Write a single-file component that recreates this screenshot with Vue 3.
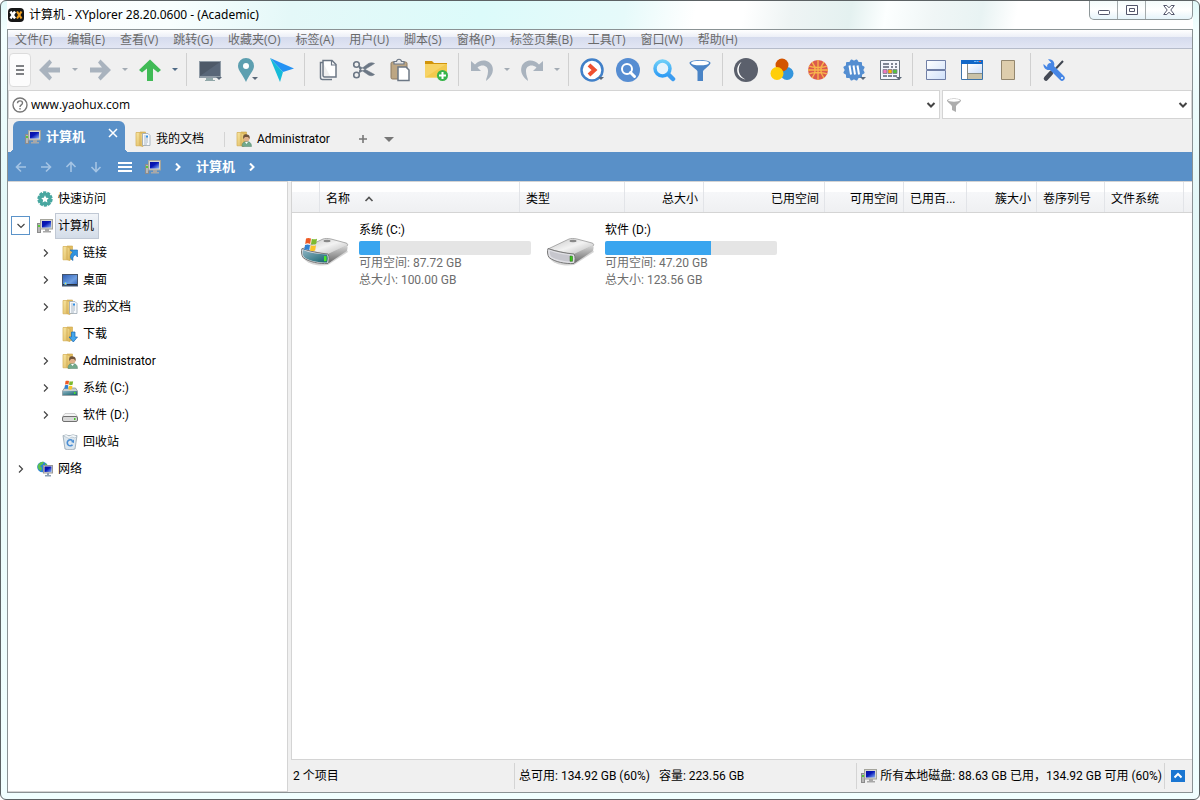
<template>
    <div class="window">
        <svg class="sprite" aria-hidden="true">
            <defs>
                <linearGradient id="g-folder" x1="0" x2="1" y1="0" y2="1">
                    <stop offset="0" stop-color="#f8e6a2" /><stop offset="1" stop-color="#dcb65a" />
                </linearGradient>
                <linearGradient id="g-screen" x1="0" x2="1" y1="0" y2="1">
                    <stop offset="0" stop-color="#0a10a0" /><stop offset=".45" stop-color="#0818b8" /><stop offset="1" stop-color="#8ab4f4" />
                </linearGradient>
                <linearGradient id="g-metal" x1="0" x2="1" y1="0" y2="1">
                    <stop offset="0" stop-color="#c4c4c4" /><stop offset=".5" stop-color="#f2f2f2" /><stop offset="1" stop-color="#b4b4b4" />
                </linearGradient>
                <linearGradient id="g-side" x1="0" x2="0" y1="0" y2="1">
                    <stop offset="0" stop-color="#d8d8d8" /><stop offset="1" stop-color="#6a6a6a" />
                </linearGradient>
                <linearGradient id="g-teal" x1="0" x2="1" y1="0" y2="1">
                    <stop offset="0" stop-color="#8fb4c4" /><stop offset="1" stop-color="#12616c" />
                </linearGradient>
                <linearGradient id="g-glass" x1="0" x2="0" y1="0" y2="1">
                    <stop offset="0" stop-color="#6ccdf8" /><stop offset="1" stop-color="#2f9cf4" />
                </linearGradient>
                <linearGradient id="g-pane" x1="0" x2="1" y1="0" y2="1">
                    <stop offset="0" stop-color="#ffffff" /><stop offset="1" stop-color="#cfe0fa" />
                </linearGradient>
                <linearGradient id="g-desk" x1="0" x2="1" y1="0" y2="1">
                    <stop offset="0" stop-color="#2c5cb4" /><stop offset=".6" stop-color="#6f9fe0" /><stop offset="1" stop-color="#2858b0" />
                </linearGradient>
            </defs>

            <symbol id="i-app" viewBox="0 0 16 16">
                <rect y="1" width="16" height="14" rx="4" fill="#161616" />
                <path d="M2.500 4.500 7 11.500M7 4.500 2.500 11.500" stroke="#fff" stroke-width="2.400" />
                <path d="M9 4.500 13.500 11.500M13.500 4.500 9 11.500" stroke="#f0a020" stroke-width="2.200" />
            </symbol>
            <symbol id="i-computer" viewBox="0 0 16 16">
                <rect x=".5" y="5.500" width="3" height="9" fill="#b8b8b8" stroke="#8c8c8c" />
                <rect x="1" y="7" width="2" height="2" fill="#58c838" />
                <rect x="3.500" y="1.500" width="12" height="9.500" fill="#d6d6d0" stroke="#a4a49c" />
                <rect x="5" y="3" width="9" height="6.500" fill="url(#g-screen)" />
                <path d="M8 11h4v2h2v1.500H6V13h2z" fill="#a8a8a8" />
            </symbol>
            <symbol id="i-folder" viewBox="0 0 16 16">
                <path d="M5 1h5.500v13.500H5z" fill="#e2bd60" stroke="#cfa648" stroke-width=".6" />
                <path d="M1 1.500h4L8 3v12.500l-3-.7H1z" fill="url(#g-folder)" stroke="#d2ac50" stroke-width=".7" />
                <path d="M5 2v12.500" stroke="#c99f44" stroke-width=".6" />
            </symbol>
            <symbol id="i-docs" viewBox="0 0 16 16">
                <use href="#i-folder" />
                <path d="M7.500 2.500H13L15 4.500v10H7.500z" fill="#f6f9fc" stroke="#9ca8b4" stroke-width=".8" />
                <path d="M9 5h2M9 7h4M9 9h4M9 11h4M9 13h3" stroke="#9aa8b8" stroke-width=".8" />
                <path d="M11 4.500h2v2h-2z" fill="#3290e4" />
            </symbol>
            <symbol id="i-user" viewBox="0 0 16 16">
                <use href="#i-folder" />
                <path d="M6 15.500c0-4 2-5 4.500-5s5 1 5 5z" fill="#72a98c" stroke="#57846c" stroke-width=".5" />
                <circle cx="10.500" cy="7.500" r="3" fill="#dfb08a" />
                <path d="M7.300 8C6.500 4 8.500 3 10.500 3.200S14.500 5 13.500 8L12 6 9 6z" fill="#70543c" />
                <path d="m9 11 1.500 2L12 11" fill="#fff" />
            </symbol>
            <symbol id="i-links" viewBox="0 0 16 16">
                <use href="#i-folder" />
                <path d="M8 5h7.500v7l-2.300-2.300c-2 1.500-2.700 3-2.200 5.800-3.500-2-3.300-5.500-.2-8.200z" fill="#2f94e0" stroke="#1767b4" stroke-width=".6" />
            </symbol>
            <symbol id="i-download" viewBox="0 0 16 16">
                <use href="#i-folder" />
                <path d="M9.500 6h3.500v5h2.500l-4.200 5-4.300-5h2.500z" fill="#43a6ec" stroke="#1767b4" stroke-width=".7" />
            </symbol>
            <symbol id="i-desktop" viewBox="0 0 16 16">
                <rect x=".5" y="2.500" width="15" height="11.500" fill="url(#g-desk)" stroke="#44546c" />
                <path d="M1 12h14v1.500H1z" fill="#28323e" />
                <circle cx="3.500" cy="11.500" r="1.500" fill="#66c0f4" />
                <circle cx="3.500" cy="11.500" r=".7" fill="#f4dc50" />
            </symbol>
            <symbol id="i-flag" viewBox="0 0 16 16">
                <path d="M3 1.500c2-1 3.500-.5 5 0L7.200 7c-2-1-3.500-.7-5 0z" fill="#ee5a24" />
                <path d="M8.800 1.800c2 .9 3.500.6 5.200-.1l-.8 5.200c-1.700.8-3.400.8-5.200 0z" fill="#7cba30" />
                <path d="M2 8c1.700-.8 3.200-.8 5 0l-.8 5.200c-1.500-.8-3.300-.8-5 0z" fill="#3282d2" />
                <path d="M7.800 8.200c1.700.8 3.400.8 5.200 0l-.8 5.200c-1.800.9-3.400.8-5.200 0z" fill="#fac428" />
            </symbol>
            <symbol id="i-sysdrive" viewBox="0 0 16 16">
                <path d="m2.500 8-2 3v4.500h15V11l-2-3z" fill="#c9cfd0" stroke="#80888c" stroke-width=".7" />
                <path d="M.8 11h14.400v4H.8z" fill="url(#g-teal)" />
                <path d="M12 12h1.500v2H12z" fill="#48e030" />
                <svg x="1" y="0" width="12" height="11"><use href="#i-flag" /></svg>
            </symbol>
            <symbol id="i-drive" viewBox="0 0 16 16">
                <path d="m3 6.500-2.500 3h15l-2.500-3z" fill="#f4f4f4" stroke="#b4b4b4" stroke-width=".6" />
                <rect x=".5" y="9.500" width="15" height="5" rx="1.500" fill="#d8d8d8" stroke="#707070" />
                <path d="M12 11h1.500v2H12z" fill="#46c828" />
            </symbol>
            <symbol id="i-trash" viewBox="0 0 16 16">
                <path d="m1 1.500 2 13.500c3 1 7 1 10 0l2-13.500z" fill="#dce6ee" stroke="#92a2ae" stroke-width=".8" />
                <path d="m1 2 3-1.500L7 2l4-1.500L15 2l-2 2-3-1-3 1.500L4 3z" fill="#f4f8fb" stroke="#a8b6c0" stroke-width=".6" />
                <path d="M10.500 6.800a3 3 0 1 0 0 4" fill="none" stroke="#4a8ed4" stroke-width="1.600" />
                <path d="m9 8 3-2.500V9z" fill="#4a8ed4" />
            </symbol>
            <symbol id="i-network" viewBox="0 0 16 16">
                <circle cx="5.500" cy="6" r="5.300" fill="#2a82d6" />
                <path d="M1 4c2-3 4-3.500 6-3.200L6 3 3 5l2 2-1 3C2 9 0 7 1 4M8 2l2.500 2L8 5z" fill="#5cc24c" />
                <rect x="6.500" y="4.500" width="9" height="7.500" fill="#dcdcdc" stroke="#989898" />
                <rect x="7.500" y="5.500" width="7" height="5.500" fill="url(#g-screen)" />
                <path d="M10 12h2v2h2v1.500H8V14h2z" fill="#8ca0b4" />
            </symbol>
            <symbol id="i-quick" viewBox="0 0 16 16">
                <circle cx="8" cy="8" r="6.600" fill="#48a7a0" />
                <circle cx="8" cy="8" r="6.800" fill="none" stroke="#48a7a0" stroke-width="1.800" stroke-dasharray="3.200 1.070" />
                <path d="m8 4.300 1.200 2.400 2.600.4-1.900 1.800.5 2.600L8 10.300l-2.400 1.200.5-2.600-1.900-1.800 2.600-.4z" fill="#fff" />
            </symbol>

            <symbol id="d-drive" viewBox="0 0 48 30">
                <path d="M3 22c6 7 18 7 24 6l20-13-2-4z" fill="#000" opacity=".16" />
                <path d="M1 12 22 2c2-.7 5-.7 8 0l15 4c2 .7 2 2 1 3L27 18z" fill="url(#g-metal)" stroke="#8c8c8c" stroke-width=".7" />
                <path d="M27 17 46 8c.8 2 .8 4-.3 6L28 26z" fill="url(#g-side)" />
                <path d="M1 11.500c8 3 16 4.500 26 5.500 1.500 3 1.500 6.500 0 9.500-9 .5-19-1.500-25-6C.5 18 0 14 1 11.500z" fill="#dfdfe4" stroke="#777" stroke-width="1" />
                <path d="M3 14c7 2.500 14 3.800 22 4.500.8 2 .8 4 0 6-8 0-16-1.500-21-5-1-1.500-1.500-3.500-1-5.500z" fill="#c6c6cd" />
                <path d="m23 19 2.500.3v5H23z" fill="#38c818" stroke="#286018" stroke-width=".5" />
                <ellipse cx="26" cy="4" rx="3.500" ry="1.200" fill="#888" />
            </symbol>
            <symbol id="d-sysdrive" viewBox="0 0 48 30">
                <use href="#d-drive" />
                <path d="M2 13c7 3 15 4 24 4.500 1 2.500 1 5 0 8-9 0-18-1.500-23-5.500C1.500 18 1.500 15 2 13z" fill="url(#g-teal)" />
                <path d="m23 19 2.500.3v5H23z" fill="#48e828" />
                <svg x="1" y="0" width="18" height="16"><use href="#i-flag" /></svg>
            </symbol>

            <symbol id="t-back" viewBox="0 0 24 24"><path d="M1 12 11.500 1.500 14 4.500 10 9.500h12v5H10l4 5-2.500 3z" fill="#a9b3be" /></symbol>
            <symbol id="t-forward" viewBox="0 0 24 24"><path d="M23 12 12.500 1.500 10 4.500l4 5H2v5h12l-4 5 2.500 3z" fill="#a9b3be" /></symbol>
            <symbol id="t-up" viewBox="0 0 24 24"><path d="M12 1.500 23 12l-3 2.500-5-4V23H9V10.500l-5 4L1 12z" fill="#40bb56" /></symbol>
            <symbol id="t-monitor" viewBox="0 0 24 24">
                <path d="M1 3h22v17H1z" fill="#909ba6" /><path d="M2 4h20v14H2z" fill="#4e5968" /><path d="M2 18 22 4v14z" fill="#596678" />
                <path d="M8 20h7v2h2v1H7v-1h1z" fill="#91a7a9" />
            </symbol>
            <symbol id="t-pin" viewBox="0 0 24 24">
                <path d="M12 24C9 17 4 12.500 4 8a8 8 0 0 1 16 0c0 4.500-5 9-8 16z" fill="#5d9fb0" /><circle cx="12" cy="8" r="3" fill="#fff" />
            </symbol>
            <symbol id="t-plane" viewBox="0 0 24 24">
                <path d="m0 0 24 10.500L13 14z" fill="#2492f4" /><path d="m0 0 13 14-3 10z" fill="#17bbd8" />
            </symbol>
            <symbol id="t-copy" viewBox="0 0 24 24">
                <path d="M7 4.500H4.500v15a2 2 0 0 0 2 2H16M7 2.500h9l4 4V19H8.500A1.500 1.500 0 0 1 7 17.500z" fill="#fff" stroke="#6c7785" stroke-width="1.500" />
                <path d="M15.500 3v4H20" fill="none" stroke="#6c7785" stroke-width="1.200" />
            </symbol>
            <symbol id="t-cut" viewBox="0 0 24 24">
                <path d="m7 8 15.500 8.500c-2 1.500-4 1.500-6 .5L7 10.500M7 15l15.500-9.500c-2-1-4-1-6 0L7 12.500" fill="#6c7785" stroke="#6c7785" stroke-width=".6" />
                <circle cx="4.500" cy="6.500" r="2.800" fill="#f0f0f0" stroke="#6c7785" stroke-width="1.600" />
                <circle cx="4.500" cy="17" r="2.800" fill="#f0f0f0" stroke="#6c7785" stroke-width="1.600" />
            </symbol>
            <symbol id="t-paste" viewBox="0 0 24 24">
                <rect x="3" y="4" width="16" height="17" rx="1.500" fill="#bda683" stroke="#8c7a62" />
                <path d="M6 6V3.500h2.500c.5-3 4.500-3 5 0H16V6z" fill="#e8e8e8" stroke="#6c7785" stroke-width="1.200" />
                <path d="M10 9h8l3 3v10.500H10z" fill="#fff" stroke="#6c7785" stroke-width="1.500" />
            </symbol>
            <symbol id="t-newfolder" viewBox="0 0 24 24">
                <path d="M1 3h7l2 2h13v14H1z" fill="#d1940a" /><path d="M1 6h22v13.500H1z" fill="#f7d365" />
                <path d="M1 19.500 22 6h1v13.500z" fill="#f2c94d" />
                <circle cx="18.500" cy="17.500" r="5.500" fill="#37b44a" /><path d="M18.500 14v7M15 17.500h7" stroke="#fff" stroke-width="2" />
            </symbol>
            <symbol id="t-undo" viewBox="0 0 24 24">
                <path d="M1 3v10h10L7.500 9.500c5-4 11-1.500 10.500 4 0 4-2 6.500-2 9.500 5-3.500 8-9 6.500-14C20.500 1.500 10.500 0 5 6.500z" fill="#a9b3be" />
            </symbol>
            <symbol id="t-redo" viewBox="0 0 24 24">
                <path d="M23 3v10H13l3.500-3.500c-5-4-11-1.500-10.500 4 0 4 2 6.500 2 9.500C3 19.500 0 14 1.500 9 3.500 1.500 13.500 0 19 6.500z" fill="#a9b3be" />
            </symbol>
            <symbol id="t-goto" viewBox="0 0 24 24">
                <circle cx="12" cy="12" r="10.500" fill="#fff" stroke="#4180c8" stroke-width="2.500" />
                <path d="m9 7 5.500 5L9 17" fill="none" stroke="#ef5030" stroke-width="4" />
            </symbol>
            <symbol id="t-find" viewBox="0 0 24 24">
                <circle cx="12" cy="12" r="12" fill="#568dd2" /><circle cx="11" cy="11" r="5" fill="none" stroke="#fff" stroke-width="2" />
                <path d="m14.500 14.500 4 4" stroke="#fff" stroke-width="3" stroke-linecap="round" />
            </symbol>
            <symbol id="t-glass" viewBox="0 0 24 24">
                <path d="m16 16 5 5" stroke="#3c9cf0" stroke-width="4.500" stroke-linecap="round" />
                <circle cx="10.500" cy="10.500" r="7.500" fill="#e7f3fb" stroke="url(#g-glass)" stroke-width="3.500" />
            </symbol>
            <symbol id="t-filter" viewBox="0 0 24 24">
                <path d="M1.500 5c0-4 21-4 21 0 0 2-7.500 7-7.500 8.500V23H9.500v-9.500C9.500 12 1.500 7 1.500 5z" fill="#4a84c6" />
                <ellipse cx="12" cy="5" rx="9" ry="2.300" fill="#fff" />
            </symbol>
            <symbol id="t-dark" viewBox="0 0 24 24">
                <circle cx="12" cy="12" r="12" fill="#5b606c" /><path d="M7.500 4C1 8 1.500 19.500 11.500 21.500 4.500 18 2.500 10.500 7.500 4z" fill="#fff" />
            </symbol>
            <symbol id="t-colors" viewBox="0 0 24 24">
                <circle cx="17" cy="15.500" r="6.500" fill="#3495dc" /><circle cx="12" cy="7" r="6.500" fill="#d35400" /><circle cx="7" cy="15.500" r="6.500" fill="#ffce08" />
            </symbol>
            <symbol id="t-ball" viewBox="0 0 24 24">
                <circle cx="12" cy="12" r="10" fill="#dc5a4b" />
                <path d="M12 2v20M2 12h20M6 4c4 5 4 11 0 16M18 4c-4 5-4 11 0 16M3 8c2 1 5 1.500 9 1.500S19 9 21 8M3 16c2-1 5-1.500 9-1.500s7 .5 9 1.500" fill="none" stroke="#f7b64c" stroke-width="1.300" />
            </symbol>
            <symbol id="t-badge" viewBox="0 0 24 24">
                <g fill="#548ed1">
                    <rect x="4" y="4" width="16" height="16" rx="1" />
                    <rect x="4" y="4" width="16" height="16" rx="1" transform="rotate(30 12 12)" />
                    <rect x="4" y="4" width="16" height="16" rx="1" transform="rotate(60 12 12)" />
                </g>
                <path d="M7.500 7.500 9 16.500M11.500 7.500 13 16.500M15.500 7.500 17 16.500" stroke="#fff" stroke-width="2" />
            </symbol>
            <symbol id="t-calendar" viewBox="0 0 24 24">
                <path d="M2.500 2.500h19v19h-19z" fill="#f4f6fd" stroke="#68727e" />
                <path d="M5 6h6M13 6h2M17 6h2M5 9h6M13 9h2M17 9h2M5 18h4M10 18h4M15 18h4" stroke="#808695" stroke-width="2" />
                <path d="M5 11.500h4v4H5z" fill="#ef78bd" /><path d="M10 11.500h4v4h-4z" fill="#ffb000" /><path d="M15 11.500h4v4h-4z" fill="#54c33b" />
                <path d="M5 11.500h4v4H5zM10 11.500h4v4h-4zM15 11.500h4v4h-4z" fill="none" stroke="#79798c" stroke-width=".8" />
            </symbol>
            <symbol id="t-split" viewBox="0 0 24 24">
                <path d="M2.500 2.500h19v9h-19zM2.500 12.500h19v9h-19z" fill="url(#g-pane)" stroke="#707fa6" />
            </symbol>
            <symbol id="t-layout" viewBox="0 0 24 24">
                <path d="M1.500 2.500h21v19h-21z" fill="#fff" stroke="#3d74aa" /><path d="M1 2h22v4H1z" fill="#1268c8" />
                <path d="M8 6h14v9H8z" fill="url(#g-pane)" /><path d="M8 16h14v5H8z" fill="#c9c2a8" /><path d="M7.500 6v15M8 15.500h14" stroke="#8a8d84" />
                <path d="M19 3h2v1h-2z" fill="#f05b35" /><path d="M14 3h2v1h-2zM16.500 3h2v1h-2z" fill="#70b8f5" />
            </symbol>
            <symbol id="t-panel" viewBox="0 0 24 24"><path d="M5.500 2.500h13v19h-13z" fill="#decdac" stroke="#94876e" /></symbol>
            <symbol id="t-tools" viewBox="0 0 24 24">
                <path d="m21 3-7 7.500" stroke="#3e4550" stroke-width="2" /><path d="m9 15-5 5.500" stroke="#454a55" stroke-width="4.500" stroke-linecap="round" />
                <path d="m8 8 12 12" stroke="#4686e5" stroke-width="5.500" stroke-linecap="round" />
                <path d="M1.500 6C1 10 5 13.500 9 11.500c4-2 4.500-7 1-9.500-1-.8-2.500-1-4-.8L9 4.500 8.500 8 5 9z" fill="#4686e5" /><circle cx="20" cy="20" r="1" fill="#fff" />
            </symbol>
        </svg>

        <header class="titlebar">
            <svg class="icon"><use href="#i-app" /></svg>
            <h1>计算机 - XYplorer 28.20.0600 - (Academic)</h1>
            <div class="controls">
                <button type="button" aria-label="最小化">
                    <svg width="12" height="12" viewBox="0 0 12 12"><rect x=".5" y="6.500" width="11" height="4" rx="1" fill="#fff" stroke="#53566b" /></svg>
                </button>
                <button type="button" aria-label="最大化">
                    <svg width="12" height="12" viewBox="0 0 12 12"><path d="M.5 1.500h11v9H.5z" fill="#fff" stroke="#53566b" /><path d="M3.500 4.500h5v3h-5z" fill="#fff" stroke="#53566b" /></svg>
                </button>
                <button type="button" class="close" aria-label="关闭">
                    <svg width="12" height="12" viewBox="0 0 12 12"><path d="M.7 1.500h3.100L6 3.800l2.200-2.300h3.100L7.800 6l3.500 4.500H8.200L6 8.200l-2.200 2.300H.7L4.200 6z" fill="#fff" stroke="#53566b" /></svg>
                </button>
            </div>
        </header>

        <div class="client">
            <nav class="menubar">
                <button v-for="item in menus" :key="item" type="button">{{ item }}</button>
            </nav>

            <div class="toolbar">
                <button type="button" class="grip" aria-label="工具栏">
                    <svg width="8" height="12" viewBox="0 0 8 12"><path d="M0 2h8M0 6h8M0 10h8" stroke="#55585c" stroke-width="1.500" /></svg>
                </button>
                <template v-for="(tool, i) in tools" :key="i">
                    <span v-if="tool.type === 'sep'" class="sep"></span>
                    <button v-else-if="tool.type === 'caret'" type="button" class="caret" :class="{ strong: tool.strong }" aria-label="更多"></button>
                    <button v-else type="button" class="tool" :aria-label="tool.label">
                        <svg><use :href="'#t-' + tool.icon" /></svg>
                        <i v-if="tool.drop"></i>
                    </button>
                </template>
            </div>

            <div class="address-row">
                <div class="combo address">
                    <svg class="icon" viewBox="0 0 16 16">
                        <circle cx="8" cy="8" r="7" fill="#fff" stroke="#777" stroke-width="1.400" />
                        <path d="M5.500 6.200C5.500 3 10.500 3.200 10.500 6c0 2-2.500 1.800-2.500 4M8 11v1.500" fill="none" stroke="#777" stroke-width="1.400" />
                    </svg>
                    <input v-model="address" type="text" aria-label="地址">
                    <button type="button" aria-label="展开地址"><svg viewBox="0 0 10 10"><path d="m1.500 3 3.500 3.500L8.500 3" /></svg></button>
                </div>
                <div class="combo filter">
                    <svg class="icon" viewBox="0 0 16 16"><path d="M1 3.500C1 .8 15 .8 15 3.500c0 1.500-5 4.500-5 6V15l-4-2V9.500C6 8 1 5 1 3.500z" fill="#adadad" /><ellipse cx="8" cy="3.300" rx="6" ry="1.400" fill="#fff" /></svg>
                    <input v-model="filter" type="text" aria-label="筛选">
                    <button type="button" aria-label="展开筛选"><svg viewBox="0 0 10 10"><path d="m1.500 3 3.500 3.500L8.500 3" /></svg></button>
                </div>
            </div>

            <div class="tabs">
                <div class="tab active">
                    <svg class="icon"><use href="#i-computer" /></svg>
                    <span>计算机</span>
                    <button type="button" aria-label="关闭标签"><svg width="10" height="10" viewBox="0 0 10 10"><path d="m1 1 8 8M9 1 1 9" stroke="#fff" stroke-width="1.500" /></svg></button>
                </div>
                <div class="tab docs"><svg class="icon"><use href="#i-docs" /></svg><span>我的文档</span></div>
                <div class="tab user"><svg class="icon"><use href="#i-user" /></svg><span>Administrator</span></div>
                <button type="button" class="tab-btn" aria-label="新建标签"><svg width="10" height="10" viewBox="0 0 10 10"><path d="M5 1v8M1 5h8" stroke="#777" stroke-width="1.600" /></svg></button>
                <button type="button" class="tab-btn" aria-label="标签列表"><svg width="10" height="10" viewBox="0 0 10 10"><path d="M0 3h10L5 8z" fill="#777" /></svg></button>
            </div>

            <div class="crumbs">
                <button v-for="arrow in arrows" :key="arrow.label" type="button" class="nav-arrow" :aria-label="arrow.label">
                    <svg width="12" height="12" viewBox="0 0 12 12"><path :d="arrow.path" /></svg>
                </button>
                <button type="button" class="crumb-menu" aria-label="菜单"><svg width="14" height="12" viewBox="0 0 14 12"><path d="M0 2h14M0 6h14M0 10h14" stroke="#fff" stroke-width="2" /></svg></button>
                <svg class="icon"><use href="#i-computer" /></svg>
                <svg class="chev" viewBox="0 0 8 8"><path d="m2 .5 3.500 3.500L2 7.500" /></svg>
                <a href="#">计算机</a>
                <svg class="chev" viewBox="0 0 8 8"><path d="m2 .5 3.500 3.500L2 7.500" /></svg>
            </div>

            <div class="body">
                <ul class="tree">
                    <li v-for="node in nodes" :key="node.name" :class="{ child: node.child, selected: node.open }">
                        <button v-if="node.arrow || node.open" type="button" class="toggle" :class="{ open: node.open }" :aria-label="'展开 ' + node.name">
                            <svg width="8" height="8" viewBox="0 0 8 8"><path :d="node.open ? 'M.5 2 4 5.500 7.500 2' : 'm2 .5 3.500 3.500L2 7.500'" /></svg>
                        </button>
                        <span v-else class="toggle"></span>
                        <svg class="icon"><use :href="'#i-' + node.icon" /></svg>
                        <span class="name">{{ node.name }}</span>
                    </li>
                </ul>

                <main class="pane">
                    <div class="list">
                        <div class="head">
                            <button v-for="(col, i) in columns" :key="i" type="button" :class="col.cls">
                                {{ col.name }}<svg v-if="col.sorted" width="10" height="8" viewBox="0 0 10 8"><path d="M1.500 6 5 2.500 8.500 6" fill="none" stroke="#555" stroke-width="1.700" /></svg>
                            </button>
                        </div>
                        <div class="drives">
                            <div v-for="drive in drives" :key="drive.name" class="drive">
                                <svg class="disk"><use :href="'#d-' + drive.icon" /></svg>
                                <div class="info">
                                    <div class="title">{{ drive.name }}</div>
                                    <div class="bar"><div :style="{ width: drive.used + '%' }"></div></div>
                                    <div class="meta">可用空间: {{ drive.free }} GB</div>
                                    <div class="meta">总大小: {{ drive.total }} GB</div>
                                </div>
                            </div>
                        </div>
                    </div>
                    <footer class="status">
                        <div class="count">2 个项目</div>
                        <div class="space"><span>总可用: 134.92 GB (60%)</span><span>容量: 223.56 GB</span></div>
                        <div class="disks"><svg class="icon"><use href="#i-computer" /></svg>所有本地磁盘: 88.63 GB 已用，134.92 GB 可用 (60%)</div>
                        <div class="end"><button type="button" aria-label="信息面板"><svg width="8" height="8" viewBox="0 0 8 8"><path d="M.5 5.500 4 2l3.500 3.500" fill="none" stroke="#fff" stroke-width="2" /></svg></button></div>
                    </footer>
                </main>
            </div>
        </div>
    </div>
</template>

<script setup>
import { ref } from 'vue';

const address = ref('www.yaohux.com')
const filter = ref('')

const menus = [
    '文件(F)', '编辑(E)', '查看(V)', '跳转(G)', '收藏夹(O)', '标签(A)', '用户(U)',
    '脚本(S)', '窗格(P)', '标签页集(B)', '工具(T)', '窗口(W)', '帮助(H)',
]

const sep = { type: 'sep' }
const caret = { type: 'caret' }

const tools = [
    { icon: 'back', label: '后退' }, caret,
    { icon: 'forward', label: '前进' }, caret,
    { icon: 'up', label: '向上' }, { type: 'caret', strong: true },
    sep,
    { icon: 'monitor', label: '驱动器', drop: true },
    { icon: 'pin', label: '位置', drop: true },
    { icon: 'plane', label: '转到' },
    sep,
    { icon: 'copy', label: '复制' },
    { icon: 'cut', label: '剪切' },
    { icon: 'paste', label: '粘贴' },
    { icon: 'newfolder', label: '新建文件夹' },
    sep,
    { icon: 'undo', label: '撤销' }, caret,
    { icon: 'redo', label: '重做' }, caret,
    sep,
    { icon: 'goto', label: '热列表', drop: true },
    { icon: 'find', label: '查找' },
    { icon: 'glass', label: '快速搜索' },
    { icon: 'filter', label: '筛选' },
    sep,
    { icon: 'dark', label: '深色模式' },
    { icon: 'colors', label: '颜色' },
    { icon: 'ball', label: '幽灵筛选' },
    { icon: 'badge', label: '徽章', drop: true },
    { icon: 'calendar', label: '视图', drop: true },
    sep,
    { icon: 'split', label: '双窗格' },
    { icon: 'layout', label: '布局' },
    { icon: 'panel', label: '面板' },
    sep,
    { icon: 'tools', label: '配置' },
]

const arrows = [
    { label: '后退', path: 'M11 6H1.500M6 1.500 1.500 6 6 10.500' },
    { label: '前进', path: 'M1 6h9.500M6 1.500 10.500 6 6 10.500' },
    { label: '向上', path: 'M6 11V1.500M1.500 6 6 1.500 10.500 6' },
    { label: '向下', path: 'M6 1v9.500M1.500 6 6 10.500 10.500 6' },
]

const nodes = [
    { name: '快速访问', icon: 'quick' },
    { name: '计算机', icon: 'computer', open: true },
    { name: '链接', icon: 'links', child: true, arrow: true },
    { name: '桌面', icon: 'desktop', child: true, arrow: true },
    { name: '我的文档', icon: 'docs', child: true, arrow: true },
    { name: '下载', icon: 'download', child: true },
    { name: 'Administrator', icon: 'user', child: true, arrow: true },
    { name: '系统 (C:)', icon: 'sysdrive', child: true, arrow: true },
    { name: '软件 (D:)', icon: 'drive', child: true, arrow: true },
    { name: '回收站', icon: 'trash', child: true },
    { name: '网络', icon: 'network', arrow: true },
]

const columns = [
    { name: '' },
    { name: '名称', sorted: true },
    { name: '类型' },
    { name: '总大小', cls: 'right' },
    { name: '已用空间', cls: 'right' },
    { name: '可用空间', cls: 'right' },
    { name: '已用百...' },
    { name: '簇大小', cls: 'right' },
    { name: '卷序列号' },
    { name: '文件系统' },
]

const drives = [
    { name: '系统 (C:)', icon: 'sysdrive', used: 12.3, free: '87.72', total: '100.00' },
    { name: '软件 (D:)', icon: 'drive', used: 61.8, free: '47.20', total: '123.56' },
]
</script>

<style>
body {
    margin: 0;
    background: #fff;
}
</style>

<style scoped>
* {
    box-sizing: border-box;
}
.window {
    display: flex;
    flex-direction: column;
    height: 100vh;
    padding: 0 6px 6px;
    border: 1px solid #5c6264;
    border-radius: 6px;
    background: linear-gradient(#e0f9f9, #f4ffff 30px, #e4f8f8 200px, #f1ffff);
    font: 12px/18px Roboto, "Noto Sans CJK SC", sans-serif;
    color: #000;
    overflow: hidden;
}
.sprite {
    position: absolute;
    width: 0;
    height: 0;
}
button {
    display: flex;
    align-items: center;
    justify-content: center;
    flex: none;
    padding: 0;
    border: 0;
    background: none;
    font: inherit;
    color: inherit;
    white-space: nowrap;
}
.icon {
    width: 16px;
    height: 16px;
    flex: none;
}

.titlebar {
    display: flex;
    align-items: center;
    gap: 5px;
    height: 28px;
    flex: none;
    padding-left: 1px;
    background: linear-gradient(100deg, #fff 0, #f8fefe 14%, #e4f8f8 24%, #dcfbfa 40%, #e6fafa 52%, #fff 58%, #fff 62%, #eef4f4 66%, #e4f1f0 71%, #fcffff 74%, #f0f6f6 78%, #e8f3f3 82%, #fff 85%);
}
h1 {
    flex: 1;
    margin: 0;
    font: 400 12px/18px "Noto Sans", "Noto Sans CJK SC", sans-serif;
}
.controls {
    display: flex;
    align-self: flex-start;
    height: 19px;
    border: 1px solid #8e9799;
    border-top: 0;
    border-radius: 0 0 5px 5px;
    background: linear-gradient(#f4fbfb, #fff 50%, #e6f4fa);
}
.controls button {
    width: 28px;
    border-right: 1px solid #a4abad;
}
.controls .close {
    width: 46px;
    border: 0;
}

.client {
    display: flex;
    flex-direction: column;
    flex: 1;
    min-height: 0;
    border: 1px solid #8a9294;
    background: #f0f0f0;
}
.menubar {
    display: flex;
    align-items: center;
    gap: 15px;
    height: 19px;
    flex: none;
    padding: 2px 0 0 7px;
    border-bottom: 1px solid #b6bcca;
    background: linear-gradient(#fff, #eceff7 7px, #d5dbed 7px, #e2e6f4);
    color: #6a6a6a;
    font-family: "Open Sans", "Noto Sans CJK SC", sans-serif;
}

.toolbar {
    display: flex;
    align-items: center;
    height: 41px;
    flex: none;
    padding-left: 1px;
}
.grip {
    width: 22px;
    height: 34px;
    margin-right: 1px;
    border: 1px solid #dcdcdc;
    border-radius: 4px;
    background: #fcfcfc;
}
.tool {
    position: relative;
    width: 36px;
    height: 36px;
}
.tool svg {
    width: 24px;
    height: 24px;
}
.tool i {
    position: absolute;
    right: 6px;
    bottom: 8px;
    border: 3px solid transparent;
    border-top-color: #5b6878;
    border-bottom: 0;
}
.caret {
    width: 14px;
    height: 36px;
}
.caret::before {
    content: '';
    border: 3px solid transparent;
    border-top-color: #a3abb4;
    border-bottom: 0;
}
.caret.strong::before {
    border-top-color: #4f6a86;
}
.sep {
    width: 10px;
    height: 33px;
    background: linear-gradient(#d0d0d0, #d0d0d0) 4px 0 / 1px 100% no-repeat;
}

.address-row {
    display: flex;
    gap: 2px;
    height: 29px;
    flex: none;
}
.combo {
    display: flex;
    align-items: center;
    gap: 3px;
    padding: 0 3px;
    border: 1px solid #d4d4d4;
    background: #fff;
}
.address {
    flex: 1;
}
.filter {
    width: 250px;
}
.combo input {
    flex: 1;
    min-width: 0;
    padding: 0;
    border: 0;
    outline: 0;
    background: none;
    font: inherit;
    font-family: "Open Sans", "Noto Sans CJK SC", sans-serif;
}
.combo button svg {
    width: 10px;
    height: 10px;
    fill: none;
    stroke: #444;
    stroke-width: 2;
}

.tabs {
    display: flex;
    align-items: flex-end;
    height: 33px;
    flex: none;
    padding-left: 5px;
}
.tab {
    display: flex;
    align-items: center;
    gap: 5px;
    height: 26px;
}
.tab.active {
    position: relative;
    width: 112px;
    height: 31px;
    padding-left: 12px;
    border-radius: 6px 6px 0 0;
    background: #5990c8;
    color: #fff;
    font-size: 13px;
    font-weight: 700;
}
.tab.active::before,
.tab.active::after {
    content: '';
    position: absolute;
    bottom: 0;
    width: 4px;
    height: 4px;
}
.tab.active::before {
    right: 100%;
    background: radial-gradient(circle at 0 0, transparent 4px, #5990c8 4px);
}
.tab.active::after {
    left: 100%;
    background: radial-gradient(circle at 100% 0, transparent 4px, #5990c8 4px);
}
.tab.active button {
    position: absolute;
    top: 7px;
    right: 7px;
}
.tab.docs {
    margin-left: 10px;
}
.tab.user {
    margin-left: 20px;
    padding-left: 12px;
    background: linear-gradient(#d4d4d4, #d4d4d4) left center / 1px 15px no-repeat;
}
.tab-btn {
    width: 26px;
    height: 26px;
}
.tab.user + .tab-btn {
    margin-left: 20px;
}

.crumbs {
    display: flex;
    align-items: center;
    height: 29px;
    flex: none;
    background: #5990c8;
    color: #fff;
    font-size: 13px;
    font-weight: 700;
}
.nav-arrow {
    width: 25px;
}
.nav-arrow path {
    fill: none;
    stroke: #a4c4e4;
    stroke-width: 1.6;
}
.crumb-menu {
    width: 34px;
    margin-right: 3px;
}
.chev {
    width: 8px;
    height: 8px;
    margin: 0 14px 0 13px;
    fill: none;
    stroke: #fff;
    stroke-width: 2;
}
.crumbs a {
    color: inherit;
    text-decoration: none;
}

.body {
    display: flex;
    flex: 1;
    gap: 3px;
    min-height: 0;
}
.tree {
    width: 280px;
    flex: none;
    margin: 0;
    padding: 3px 0 0 3px;
    border: 1px solid #d4d4d4;
    border-left: 0;
    background: #fff;
    list-style: none;
}
.tree li {
    display: flex;
    align-items: center;
    height: 27px;
}
.tree .child {
    padding-left: 25px;
}
.toggle {
    width: 19px;
    height: 19px;
    margin-right: 7px;
}
.toggle.open {
    border: 1px solid #5b93c9;
}
.toggle path {
    fill: none;
    stroke: #444;
    stroke-width: 1.2;
}
.name {
    height: 26px;
    margin-left: 2px;
    padding: 0 4px 0 2px;
    border: 1px solid transparent;
    line-height: 24px;
}
.selected .name {
    border-color: #c0c8d4;
    background: linear-gradient(#f1f4f8, #d3dce8);
}

.pane {
    display: flex;
    flex: 1;
    flex-direction: column;
    min-width: 0;
}
.list {
    flex: 1;
    border: 1px solid #d4d4d4;
    border-right: 0;
    background: #fff;
}
.head {
    display: grid;
    grid-template-columns: 28px 200px 105px 79px 121px 79px 63px 70px 68px 79px;
    height: 31px;
    border-bottom: 1px solid #d4d4d4;
    background: linear-gradient(#fff 10px, #f6f7f9 10px, #eff0f2);
}
.head button {
    justify-content: flex-start;
    gap: 14px;
    padding: 3px 5px 0 6px;
    border-right: 1px solid #e2e4e8;
    overflow: hidden;
}
.head .right {
    justify-content: flex-end;
}
.drives {
    display: flex;
    flex-wrap: wrap;
    gap: 16px;
    padding: 7px 9px;
}
.drive {
    display: flex;
    gap: 10px;
    width: 230px;
}
.disk {
    width: 48px;
    height: 30px;
    margin-top: 17px;
    flex: none;
}
.info {
    flex: 1;
}
.title {
    height: 21px;
    line-height: 20px;
}
.bar {
    height: 14px;
    border-radius: 2px;
    background: #e5e5e5;
    overflow: hidden;
}
.bar div {
    height: 100%;
    background: #39a5ef;
}
.meta {
    line-height: 17px;
    color: #6d6d6d;
}

.status {
    display: flex;
    align-items: center;
    height: 32px;
    flex: none;
    white-space: nowrap;
}
.status > div {
    display: flex;
    align-items: center;
    height: 26px;
}
.count {
    width: 223px;
    padding-left: 2px;
}
.space {
    flex: 1;
    gap: 9px;
    padding-left: 4px;
    border-left: 1px solid #d4d4d4;
}
.disks {
    gap: 3px;
    padding: 0 2px 0 4px;
    border-left: 1px solid #d4d4d4;
}
.end {
    padding: 0 7px 0 6px;
    border-left: 1px solid #d4d4d4;
}
.end button {
    width: 14px;
    height: 12px;
    background: #1a76d2;
}
</style>
